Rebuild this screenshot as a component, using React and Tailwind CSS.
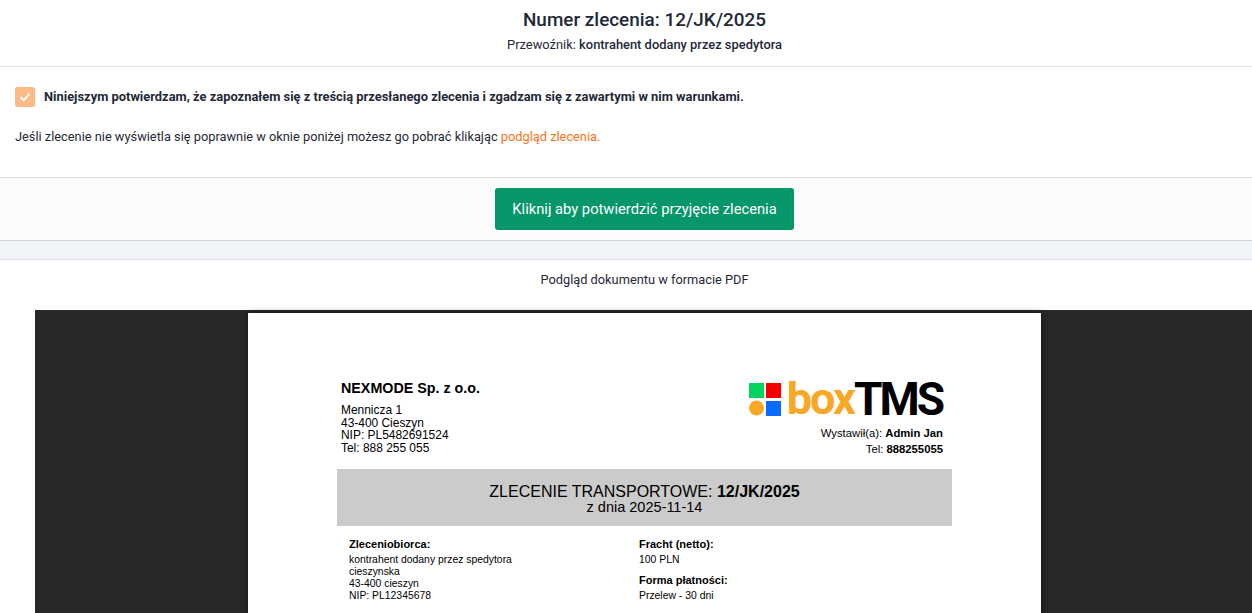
const PDF_FONT = 'font-["Liberation_Sans",Arial,sans-serif]'

function Check() {
  return (
    <div className="w-5 h-5 rounded-[3px] bg-[#fdba84] flex items-center justify-center shrink-0">
      <svg width="12" height="12" viewBox="0 0 12 12" fill="none">
        <path d="M1.5 6.2 4.6 9.2 10.5 2.8" stroke="white" strokeWidth="2" />
      </svg>
    </div>
  )
}

function Logo() {
  return (
    <div className="flex items-center justify-end h-[34px] mt-[3px] mr-[1px]">
      <svg width="32" height="33" viewBox="0 0 32 33" className="mr-[6px]">
        <rect x="0" y="0" width="15" height="15" fill="#00d45f" />
        <rect x="17" y="0" width="15" height="15" fill="#f50000" />
        <circle cx="7.5" cy="25" r="7.5" fill="#f9a825" />
        <rect x="17" y="18" width="15" height="15" fill="#0a6cff" />
      </svg>
      <span className="font-['Roboto',sans-serif] font-bold text-[45px] leading-[34px] text-[#f9a825] tracking-[-2px]">box</span>
      <span className="font-['Roboto',sans-serif] font-bold text-[46px] leading-[34px] text-black tracking-[-3px]">TMS</span>
    </div>
  )
}

function PdfPage() {
  return (
    <div className={`${PDF_FONT} w-[793px] h-[400px] bg-white mx-auto text-black pt-[66px] shadow-[0_0_6px_rgba(0,0,0,0.6)]`}>
      <div className="pl-[93px] pr-[98px] flex justify-between h-[90px]">
        <div>
          <div className="text-[14.3px] font-bold leading-[17px] mt-[1px]">NEXMODE Sp. z o.o.</div>
          <div className="text-[11.95px] leading-[12.5px] mt-[7px]">
            <div>Mennicza 1</div>
            <div>43-400 Cieszyn</div>
            <div>NIP: PL5482691524</div>
            <div>Tel: 888 255 055</div>
          </div>
        </div>
        <div className="text-right">
          <Logo />
          <div className="text-[11.3px] leading-[14px] mt-[10px]">
            Wystawił(a): <b>Admin Jan</b>
          </div>
          <div className="text-[11.3px] leading-[14px] mt-[2px]">
            Tel: <b>888255055</b>
          </div>
        </div>
      </div>
      <div className="mx-[89px] h-[57px] bg-[#cbcbcb] flex flex-col items-center pt-[15px] text-[16px] leading-[15px]">
        <div>ZLECENIE TRANSPORTOWE: <b>12/JK/2025</b></div>
        <div className="text-[14.5px] mt-[1px]">z dnia 2025-11-14</div>
      </div>
      <div className="flex pl-[101px] pt-[12px] text-[10.4px] leading-[12px]">
        <div className="w-[290px]">
          <div className="text-[11px] font-bold leading-[13px] mb-[3px]">Zleceniobiorca:</div>
          <div>kontrahent dodany przez spedytora</div>
          <div>cieszynska</div>
          <div>43-400 cieszyn</div>
          <div>NIP: PL12345678</div>
        </div>
        <div>
          <div className="text-[11px] font-bold leading-[13px] mb-[3px]">Fracht (netto):</div>
          <div>100 PLN</div>
          <div className="text-[11px] font-bold leading-[13px] mt-[8px] mb-[3px]">Forma płatności:</div>
          <div>Przelew - 30 dni</div>
        </div>
      </div>
    </div>
  )
}

export default function App() {
  return (
    <div className="h-[613px] overflow-hidden bg-white font-['Roboto',sans-serif] text-[#1f2937]">
      <div className="h-[67px] pl-[37px] border-b border-[#e2e2e4] flex flex-col items-center pt-[9px]">
        <h1 className="text-[18.9px] font-medium leading-[22px]">Numer zlecenia: 12/JK/2025</h1>
        <p className="text-[12.9px] leading-[16px] mt-[6px]">
          Przewoźnik: <span className="font-medium">kontrahent dodany przez spedytora</span>
        </p>
      </div>

      <div className="h-[110px] px-[15px] pt-[20px]">
        <div className="flex items-center gap-[9px]">
          <Check />
          <span className="text-[12.9px] font-bold">
            Niniejszym potwierdzam, że zapoznałem się z treścią przesłanego zlecenia i zgadzam się z zawartymi w nim warunkami.
          </span>
        </div>
        <p className="text-[12.8px] leading-[16px] mt-[22px]">
          Jeśli zlecenie nie wyświetla się poprawnie w oknie poniżej możesz go pobrać klikając{' '}
          <span className="text-[#f97316]">podgląd zlecenia.</span>
        </p>
      </div>

      <div className="h-[64px] pl-[37px] border-y border-t-[#dfdfe1] border-b-[#d0d4da] bg-[#fbfbfb] flex justify-center pt-[10px]">
        <button className="w-[299px] h-[42px] rounded-[3px] bg-[#059669] text-white text-[14.72px]">
          Kliknij aby potwierdzić przyjęcie zlecenia
        </button>
      </div>

      <div className="h-[19px] bg-[#f0f3f8] border-b border-[#dde1e6]" />

      <div className="h-[50px] pl-[37px] flex justify-center pt-[12px] text-[12.8px] leading-[16px]">
        Podgląd dokumentu w formacie PDF
      </div>

      <div className="ml-[35px] bg-[#282828] pt-[3px] h-[400px] pl-[213px]">
        <div className="w-[793px]">
          <PdfPage />
        </div>
      </div>
    </div>
  )
}
